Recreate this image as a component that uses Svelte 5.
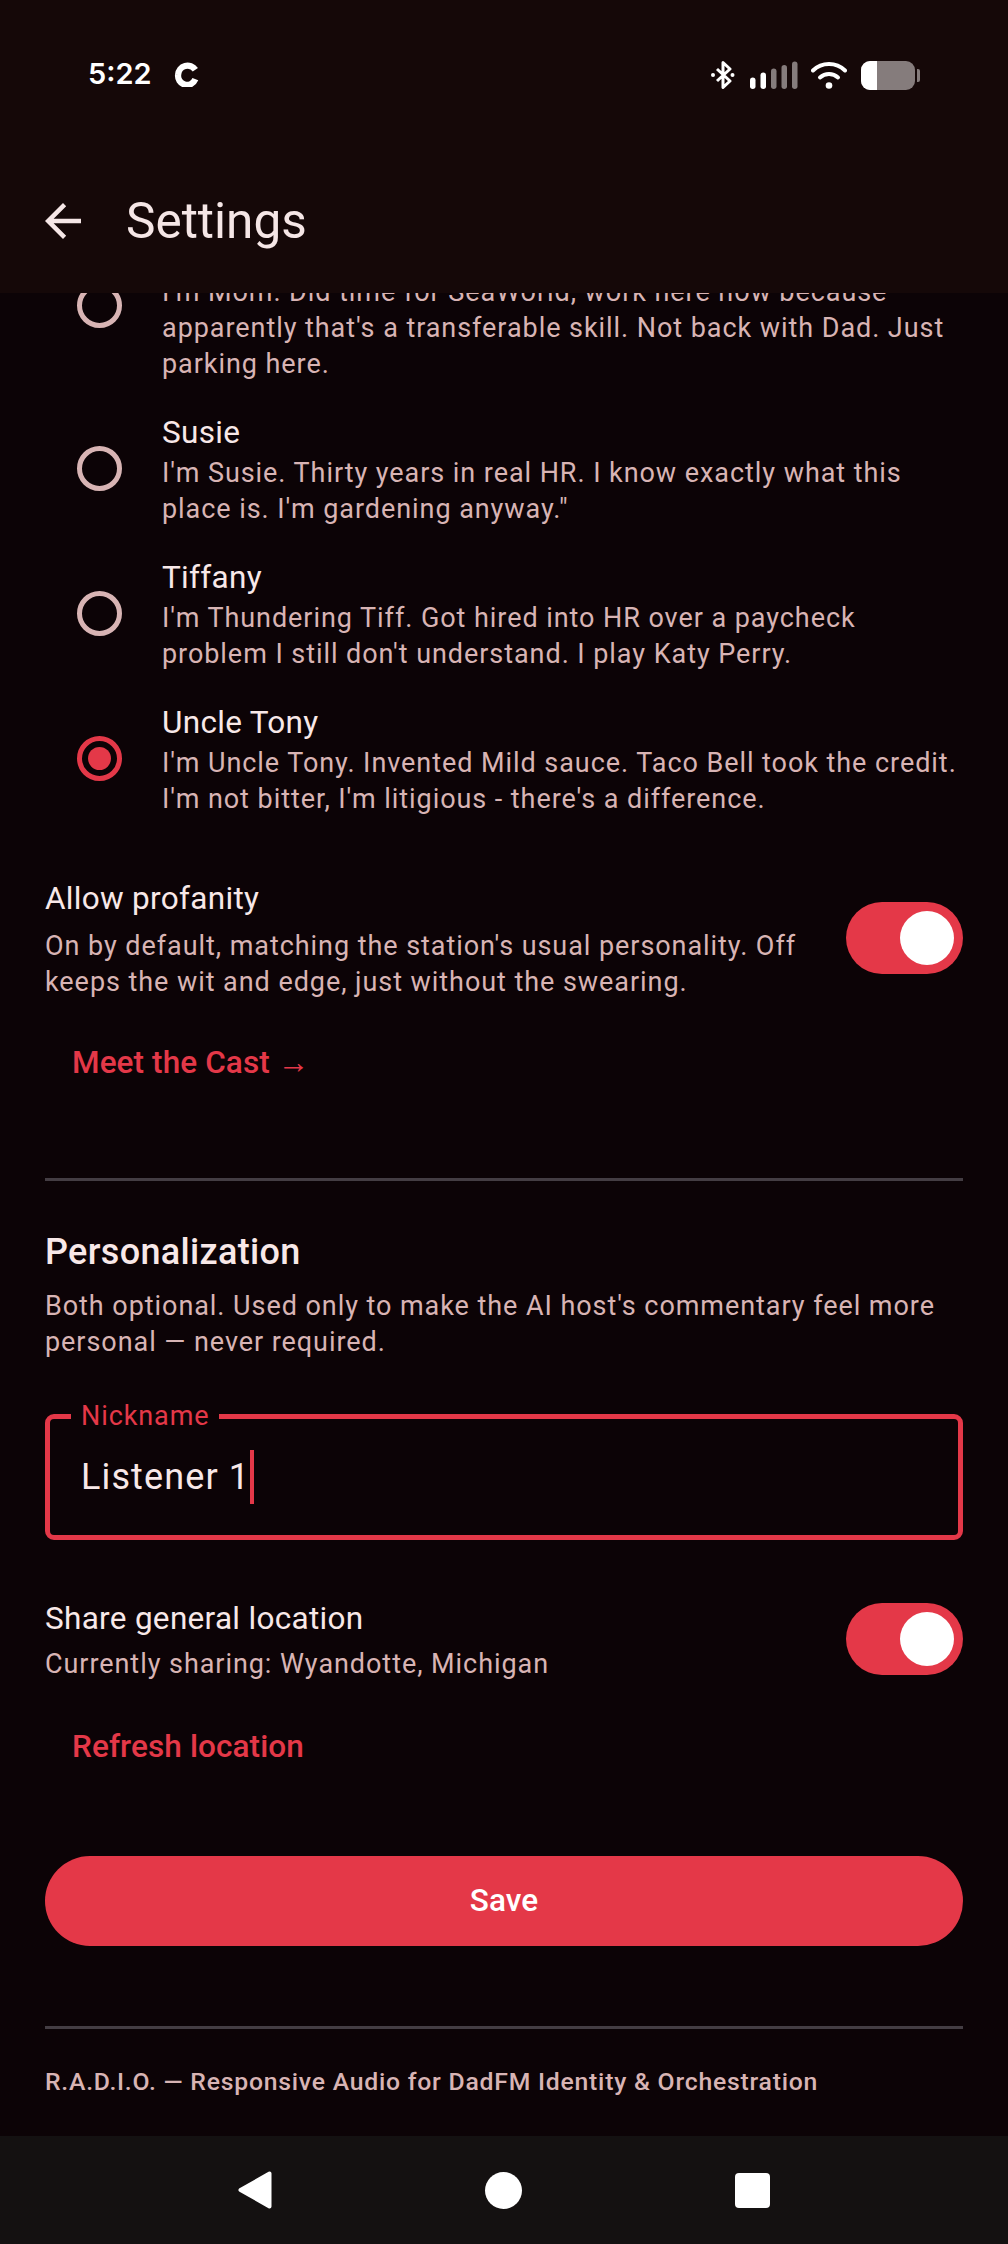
<script>
	const hosts = [
		{
			name: 'Mom',
			bio: "I'm Mom. Did time for SeaWorld, work here now because apparently that's a transferable skill. Not back with Dad. Just parking here."
		},
		{
			name: 'Susie',
			bio: `I'm Susie. Thirty years in real HR. I know exactly what this place is. I'm gardening anyway."`
		},
		{
			name: 'Tiffany',
			bio: "I'm Thundering Tiff. Got hired into HR over a paycheck problem I still don't understand. I play Katy Perry."
		},
		{
			name: 'Uncle Tony',
			bio: "I'm Uncle Tony. Invented Mild sauce. Taco Bell took the credit. I'm not bitter, I'm litigious - there's a difference.",
			selected: true
		}
	];
</script>

<div class="phone">
	<header>
		<div class="status">
			<div class="status-left">
				<span class="time">5:22</span>
				<svg class="carrier" width="25" height="25" viewBox="0 0 24 24">
					<path d="M20.5 7.5A9 9 0 0 0 4 12a8.6 8.6 0 0 0 16.5 4.5" fill="none" stroke="#fff" stroke-width="6" />
				</svg>
			</div>
			<div class="status-right">
				<svg width="24" height="28" viewBox="0 0 24 28">
					<path d="M6 8l13 12-7 6.500V1.500l7 6.500L6 20" fill="none" stroke="#fff" stroke-width="3" stroke-linejoin="round" />
					<circle cx="2" cy="14" r="2" fill="#fff" />
					<circle cx="21.500" cy="14" r="2" fill="#fff" />
				</svg>
				<svg class="signal" width="48" height="28" viewBox="0 0 48 28">
					<rect x="0" y="16.500" width="5.500" height="11.500" rx="2.750" fill="#fff" />
					<rect x="10.500" y="11.500" width="5.500" height="16.500" rx="2.750" fill="#fff" />
					<rect x="21" y="7.500" width="5.500" height="20.500" rx="2.750" fill="#857c7c" />
					<rect x="31.500" y="4" width="5.500" height="24" rx="2.750" fill="#857c7c" />
					<rect x="42" y="0.500" width="5.500" height="27.500" rx="2.750" fill="#857c7c" />
				</svg>
				<svg class="wifi" width="36" height="28" viewBox="0 0 36 28">
					<path d="M2 9.500a23 23 0 0 1 32 0" fill="none" stroke="#fff" stroke-width="4" stroke-linecap="round" />
					<path d="M9 16.500a13.500 13.500 0 0 1 18 0" fill="none" stroke="#fff" stroke-width="4" stroke-linecap="round" />
					<circle cx="18" cy="24.500" r="3.300" fill="#fff" />
				</svg>
				<div class="battery"><div class="battery-fill"></div></div>
				<div class="battery-nub"></div>
			</div>
		</div>
		<div class="appbar">
			<svg class="back" width="54" height="54" viewBox="0 0 24 24">
				<path d="M20 11H7.830l5.590-5.590L12 4l-8 8 8 8 1.410-1.410L7.830 13H20v-2z" fill="#f5e6e6" />
			</svg>
			<h1>Settings</h1>
		</div>
	</header>

	<main>
		<div class="hosts">
			{#each hosts as host}
				<div class="host">
					<div class="radio-wrap">
						<span class="radio" class:on={host.selected}></span>
					</div>
					<div class="host-text">
						<div class="label">{host.name}</div>
						<div class="desc">{host.bio}</div>
					</div>
				</div>
			{/each}
		</div>

		<div class="setting profanity">
			<div class="setting-text">
				<div class="label">Allow profanity</div>
				<div class="desc">On by default, matching the station's usual personality. Off keeps the wit and edge, just without the swearing.</div>
			</div>
			<div class="toggle"><span class="thumb"></span></div>
		</div>

		<div class="link cast">Meet the Cast →</div>

		<hr class="rule-one" />

		<h2>Personalization</h2>
		<div class="desc intro">Both optional. Used only to make the AI host's commentary feel more personal — never required.</div>

		<div class="field">
			<span class="field-label">Nickname</span>
			<span class="field-value">Listener 1</span><span class="caret"></span>
		</div>

		<div class="setting location">
			<div class="setting-text">
				<div class="label">Share general location</div>
				<div class="desc">Currently sharing: Wyandotte, Michigan</div>
			</div>
			<div class="toggle"><span class="thumb"></span></div>
		</div>

		<div class="link refresh">Refresh location</div>

		<button class="save">Save</button>

		<hr class="rule-two" />

		<p class="tagline">R.A.D.I.O. — Responsive Audio for DadFM Identity &amp; Orchestration</p>
	</main>

	<nav>
		<svg width="34" height="38" viewBox="0 0 34 38">
			<path d="M31.500 2.500V35.500L2.500 19z" fill="#fff" stroke="#fff" stroke-width="4" stroke-linejoin="round" />
		</svg>
		<span class="nav-home"></span>
		<span class="nav-recent"></span>
	</nav>
</div>

<style>
	:global(body) {
		background: #0c0306;
	}

	.phone {
		height: 2244px;
		display: flex;
		flex-direction: column;
		overflow: hidden;
		background: #0c0306;
		font-family: Roboto, sans-serif;
	}

	header {
		height: 293px;
		flex: none;
		background: #150808;
		position: relative;
		z-index: 1;
	}

	.status {
		height: 149px;
		box-sizing: border-box;
		padding: 59px 88px 0 88px;
		display: flex;
		justify-content: space-between;
		align-items: flex-start;
	}

	.status-left {
		display: flex;
		align-items: center;
		gap: 22px;
		height: 30px;
	}

	.time {
		color: #fff;
		font-family: Inter, sans-serif;
		font-size: 29px;
		font-weight: 600;
		line-height: 30px;
	}

	.status-right {
		display: flex;
		align-items: center;
		height: 30px;
		margin-top: 1px;
	}

	.signal {
		margin-left: 15px;
	}

	.wifi {
		margin-left: 13px;
	}

	.battery {
		margin-left: 14px;
		width: 54px;
		height: 29px;
		border-radius: 9px;
		background: #857c7c;
		overflow: hidden;
	}

	.battery-fill {
		width: 16px;
		height: 100%;
		background: #fff;
	}

	.battery-nub {
		width: 3px;
		height: 13px;
		margin-left: 2px;
		background: #857c7c;
		border-radius: 0 2px 2px 0;
	}

	.appbar {
		height: 144px;
		display: flex;
		align-items: center;
		padding-left: 36px;
		gap: 36px;
	}

	h1 {
		margin: 0;
		color: #f5e6e6;
		font-size: 49.500px;
		font-weight: 400;
		line-height: 63px;
	}

	main {
		flex: 1;
		min-height: 0;
		padding: 0 45px;
		overflow: hidden;
	}

	.hosts {
		margin-top: -78.500px;
	}

	.host {
		display: flex;
		align-items: center;
		padding: 14px 0;
	}

	.radio-wrap {
		width: 108px;
		flex: none;
		display: flex;
		justify-content: center;
	}

	.radio {
		width: 45px;
		height: 45px;
		box-sizing: border-box;
		border: 5px solid #d8b4b4;
		border-radius: 50%;
		display: flex;
		align-items: center;
		justify-content: center;
	}

	.radio.on {
		border-color: #e43848;
	}

	.radio.on::after {
		content: '';
		width: 23px;
		height: 23px;
		border-radius: 50%;
		background: #e43848;
	}

	.host-text {
		margin-left: 9px;
		flex: 1;
	}

	.label {
		color: #f8e8e8;
		font-size: 31.500px;
		line-height: 45px;
		letter-spacing: 0.300px;
	}

	.desc {
		color: #d8b4b4;
		font-size: 27px;
		line-height: 36px;
		letter-spacing: 0.940px;
	}

	.setting {
		display: flex;
		align-items: center;
		justify-content: space-between;
		gap: 36px;
	}

	.setting-text .desc {
		margin-top: 4.500px;
	}

	.profanity {
		margin-top: 45px;
	}

	.profanity .setting-text .desc {
		margin-top: 7px;
	}

	.toggle {
		width: 117px;
		height: 72px;
		flex: none;
		border-radius: 36px;
		background: #e43848;
		display: flex;
		align-items: center;
		justify-content: flex-end;
		padding-right: 9px;
		box-sizing: border-box;
	}

	.thumb {
		width: 54px;
		height: 54px;
		border-radius: 50%;
		background: #fff;
	}

	.link {
		height: 90px;
		padding-left: 27px;
		display: flex;
		align-items: center;
		color: #e43848;
		font-size: 31.500px;
		font-weight: 500;
		letter-spacing: 0.100px;
	}

	.cast {
		margin-top: 18px;
	}

	hr {
		margin: 0;
		border: none;
		height: 3px;
		background: #443d43;
	}

	.rule-one {
		margin-top: 70.500px;
	}

	h2 {
		margin: 44px 0 0;
		color: #f8e8e8;
		font-size: 36px;
		font-weight: 500;
		line-height: 54px;
		letter-spacing: 0.340px;
	}

	.intro {
		margin-top: 9px;
	}

	.field {
		position: relative;
		margin-top: 54px;
		height: 126px;
		box-sizing: border-box;
		border: 5px solid #e43848;
		border-radius: 9px;
		padding-left: 31px;
		display: flex;
		align-items: center;
	}

	.field-label {
		position: absolute;
		left: 21px;
		top: -21px;
		padding: 0 10px;
		background: #0c0306;
		color: #e43848;
		font-size: 27px;
		line-height: 36px;
		letter-spacing: 0.900px;
	}

	.field-value {
		color: #f8e8e8;
		font-size: 36px;
		letter-spacing: 1.125px;
	}

	.caret {
		width: 4px;
		height: 54px;
		background: #e43848;
	}

	.location {
		margin-top: 56px;
	}

	.refresh {
		margin-top: 20px;
	}

	.save {
		display: block;
		width: 100%;
		height: 90px;
		margin-top: 64px;
		border: none;
		border-radius: 45px;
		background: #e43848;
		color: #fff;
		font-family: inherit;
		font-size: 31.500px;
		font-weight: 500;
		letter-spacing: 0.100px;
	}

	.rule-two {
		margin-top: 80px;
	}

	.tagline {
		margin: 35px 0 0;
		color: #d8b4b4;
		font-size: 24.750px;
		font-weight: 500;
		line-height: 36px;
		letter-spacing: 0.770px;
	}

	nav {
		height: 108px;
		flex: none;
		background: #141111;
		display: flex;
		align-items: center;
		position: relative;
	}

	nav svg {
		margin-left: 238px;
	}

	.nav-home {
		width: 37px;
		height: 37px;
		margin-left: 213px;
		border-radius: 50%;
		background: #fff;
	}

	.nav-recent {
		width: 35px;
		height: 35px;
		margin-left: 213px;
		border-radius: 4px;
		background: #fff;
	}
</style>
